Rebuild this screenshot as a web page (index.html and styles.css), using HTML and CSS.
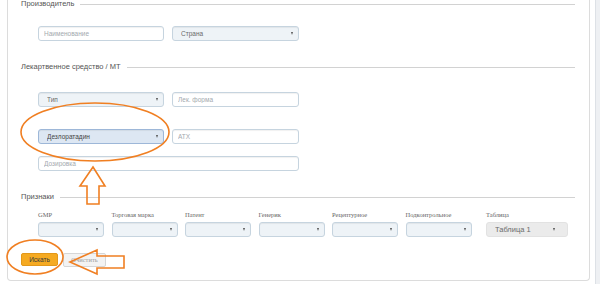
FILE: index.html
```html
<!DOCTYPE html>
<html lang="ru">
<head>
    <meta charset="UTF-8" />
    <title>Поиск</title>
    <link rel="stylesheet" href="styles.css">
</head>
<body>
    <main class="panel">
        <div class="legend"><span>Производитель</span><i class="legend-line"></i></div>
        <div class="row row-top">
            <input class="field" type="text" placeholder="Наименование">
            <div class="select-wrap"><select class="select"><option>Страна</option></select></div>
        </div>

        <div class="legend legend-gap"><span>Лекартвенное средство / МТ</span><i class="legend-line"></i></div>
        <div class="row row-first">
            <div class="select-wrap"><select class="select"><option>Тип</option></select></div>
            <input class="field" type="text" placeholder="Лек. форма">
        </div>
        <div class="row row-next">
            <div class="select-wrap"><select class="select select-active"><option>Дезлоратадин</option></select></div>
            <input class="field" type="text" placeholder="АТХ">
        </div>
        <div class="row row-close">
            <input class="field field-wide" type="text" placeholder="Дозировка">
        </div>

        <div class="legend legend-gap"><span>Признаки</span><i class="legend-line"></i></div>
        <div class="criteria">
            <div class="crit"><label>GMP</label><div class="select-wrap"><select class="select"><option></option></select></div></div>
            <div class="crit"><label>Торговая марка</label><div class="select-wrap"><select class="select"><option></option></select></div></div>
            <div class="crit"><label>Патент</label><div class="select-wrap"><select class="select"><option></option></select></div></div>
            <div class="crit"><label>Генерик</label><div class="select-wrap"><select class="select"><option></option></select></div></div>
            <div class="crit"><label>Рецептурное</label><div class="select-wrap"><select class="select"><option></option></select></div></div>
            <div class="crit"><label>Подконтрольное</label><div class="select-wrap"><select class="select"><option></option></select></div></div>
            <div class="crit crit-table"><label>Таблица</label><div class="select-wrap"><select class="select select-grey"><option>Таблица 1</option></select></div></div>
        </div>

        <div class="actions">
            <button class="btn btn-search">Искать</button>
            <button class="btn btn-clear">Очистить</button>
        </div>
    </main>
    <div class="scrollbar"></div>

    <!-- annotation marks drawn over the form -->
    <svg class="marks" width="600" height="284" viewBox="0 0 600 284">
        <ellipse cx="95" cy="132" rx="74" ry="29" />
        <polygon points="93,167 105,186 99,186 99,204 87,204 87,186 80,186" />
        <ellipse cx="35" cy="257" rx="28" ry="17" />
        <polygon points="70,262 97,250 97,256 124,256 124,268 97,268 97,274" />
    </svg>
</body>
</html>
```

FILE: styles.css
```css
:root {
    --border: #dcdcdc;
    --field-border: #c6d4df;
    --text: #6a6a6a;
    --placeholder: #a3a9ae;
    --mark: #f07f22;
}
body {
    margin: 0;
    width: 600px;
    height: 284px;
    display: flex;
    background: #fff;
    font-family: "Liberation Sans", Arial, sans-serif;
    color: var(--text);
    overflow: hidden;
}
.panel {
    margin-left: 7px;
    width: 584px;
    height: 281px;
    box-sizing: border-box;
    border: 1px solid var(--border);
    border-top: none;
    border-radius: 0 0 4px 4px;
    padding: 0 14px 0 13px;
}
.scrollbar {
    margin-left: 5px;
    width: 4px;
    height: 284px;
    background: #eef0f3;
    border-left: 1px solid #dde1e6;
}
.legend {
    display: flex;
    align-items: center;
    height: 8px;
    font-size: 7.5px;
    line-height: 8px;
    color: #555;
}
.legend-line {
    flex: 1;
    height: 1px;
    margin-left: 6px;
    background: #d2d2d2;
}
.legend-gap { margin-top: 22px; }
.row {
    display: flex;
    gap: 8px;
    padding-left: 17px;
}
.row-top { margin-top: 18px; }
.row-first { margin-top: 21px; }
.row-next { margin-top: 22px; }
.row-close { margin-top: 12px; }
.field, .select {
    display: block;
    box-sizing: border-box;
    width: 126px;
    height: 15px;
    margin: 0;
    border: 1px solid var(--field-border);
    border-radius: 3px;
    box-shadow: inset 0 1px 1px rgba(0,0,0,0.06);
    font-family: "Liberation Sans", Arial, sans-serif;
    font-size: 6.5px;
    line-height: 13px;
    color: var(--text);
    outline: none;
}
.field {
    padding: 0 5px;
    background: #fff;
}
.field::placeholder { color: var(--placeholder); }
.field-wide { width: 261px; }
.row .field + .select-wrap .select, .row .select-wrap + .field { width: 127px; }
.select-wrap {
    position: relative;
    height: 15px;
}
.select-wrap::after {
    content: "";
    position: absolute;
    right: 6px;
    top: 6px;
    border-left: 1.5px solid transparent;
    border-right: 1.5px solid transparent;
    border-top: 3px solid #555;
}
.select {
    appearance: none;
    -webkit-appearance: none;
    padding: 0 8px;
    background: #eef3f7;
}
.select-active {
    background: #dde7f3;
    border-color: #9db7d8;
    color: #444;
}
.select-grey {
    background: #ebebeb;
    border-color: #e2e2e2;
    box-shadow: none;
    font-size: 7.5px;
}
.criteria {
    display: grid;
    grid-template-columns: repeat(6, 66px) 82px;
    column-gap: 7.5px;
    margin-top: 9px;
    padding-left: 17px;
}
.crit label {
    display: block;
    height: 9px;
    line-height: 9px;
    margin-bottom: 3px;
    font-family: "Liberation Serif", "Times New Roman", serif;
    font-size: 6.5px;
    color: #666;
}
.crit .select { width: 66px; }
.crit-table { margin-left: 7px; }
.crit-table .select { width: 82px; }
.actions {
    display: flex;
    align-items: flex-start;
    gap: 5px;
    margin-top: 16px;
}
.btn {
    display: block;
    height: 14px;
    padding: 0;
    border-radius: 2px;
    font-size: 6.5px;
    line-height: 12px;
    cursor: pointer;
}
.btn-search {
    width: 37px;
    height: 13px;
    line-height: 11px;
    background: #f5aa22;
    border: 1px solid #e3981a;
    color: #3a3a3a;
    font-family: "Liberation Sans", Arial, sans-serif;
}
.btn-clear {
    width: 43px;
    background: #f3f3f3;
    border: 1px solid #d6d6d6;
    color: #a0a0a0;
    font-family: "Liberation Serif", "Times New Roman", serif;
}
.marks {
    position: absolute;
    left: 0;
    top: 0;
    pointer-events: none;
}
.marks ellipse, .marks polygon {
    fill: none;
    stroke: var(--mark);
    stroke-width: 1.6;
    stroke-linejoin: miter;
}
```
